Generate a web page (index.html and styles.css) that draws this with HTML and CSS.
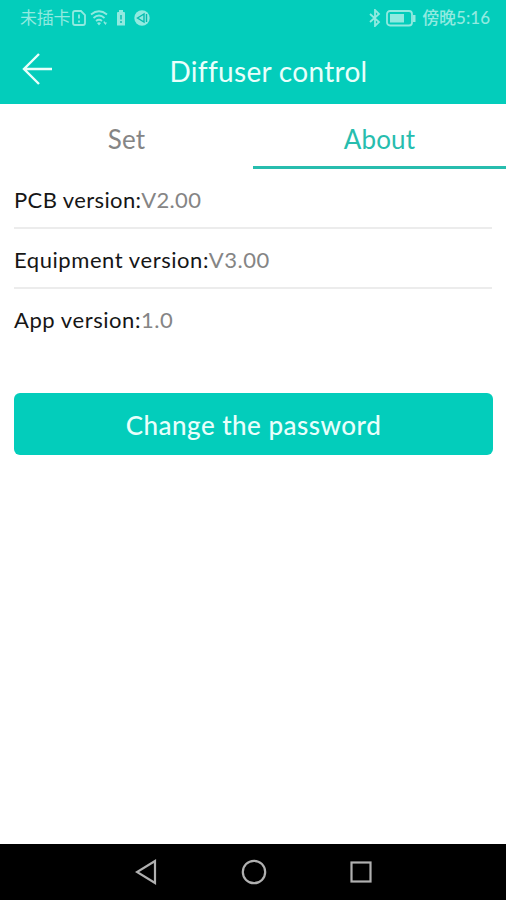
FILE: index.html
```html
<!DOCTYPE html>
<html lang="en">
<head>
<meta charset="utf-8">
<title>Diffuser control</title>
<link rel="stylesheet" href="styles.css">
</head>
<body>
<div class="screen">
  <header class="header">
    <div class="status">
      <div class="status-left">
        <span class="carrier">未插卡</span>
        <svg class="sim" width="14" height="16" viewBox="0 0 14 16"><path d="M3 1h6l4 4v8q0 2-2 2H3q-2 0-2-2V3q0-2 2-2zM7 4.500v4M7 10.500v2"/></svg>
        <svg class="wifi" width="19" height="16" viewBox="0 0 19 16"><path d="M1 4.500q8-6.500 16 0M3.500 8q5.500-5 11 0M6 11q3-2.500 6 0"/><path class="solid" d="M7 13q2-1.500 4 0l-2 2.500zM14 11l1.500 1.500H17l-1.500 2.500-2-2.500z"/></svg>
        <svg class="cell" width="10" height="16" viewBox="0 0 10 16"><path class="solid" d="M3 0h4v2h1.500l.5 1v12.500H1V3l.5-1H3z"/><path class="cut" d="M5 5v4.500M5 11v2"/></svg>
        <svg class="globe" width="16" height="16" viewBox="0 0 16 16"><circle class="solid" cx="8" cy="8" r="7.700"/><path class="cut" d="M3.500 8L10 4v8zM12.500 4v8"/></svg>
      </div>
      <div class="status-right">
        <svg class="bt" width="12" height="18" viewBox="0 0 12 18"><path d="M1 5l9 8-4 4V1l4 4-9 8"/></svg>
        <svg class="battery" width="30" height="17" viewBox="0 0 30 17"><rect x="1" y="1" width="25" height="14.500" rx="3"/><path class="solid" d="M4 4h14v8.500H4zM27 5h2.500v7H27z"/></svg>
        <span class="clock">傍晚5:16</span>
      </div>
    </div>
    <div class="titlebar">
      <svg class="back" width="32" height="34" viewBox="0 0 32 34"><path d="M17 2L2 17l15 15M2 17h28"/></svg>
      <h1 class="title">Diffuser control</h1>
    </div>
  </header>
  <nav class="tabs">
    <div class="tab">Set</div>
    <div class="tab active">About</div>
  </nav>
  <main class="content">
    <div class="row pcb">PCB version:<span class="value">V2.00</span></div>
    <div class="row">Equipment version:<span class="value">V3.00</span></div>
    <div class="row last">App version:<span class="value">1.0</span></div>
    <button class="password">Change the password</button>
  </main>
  <footer class="navbar">
    <svg width="24" height="26" viewBox="0 0 24 26"><path d="M20 2v22L2 13z"/></svg>
    <svg width="26" height="26" viewBox="0 0 26 26"><circle cx="13" cy="13" r="11.200"/></svg>
    <svg width="24" height="24" viewBox="0 0 24 24"><rect x="2.500" y="2.500" width="19" height="19"/></svg>
  </footer>
</div>
</body>
</html>
```

FILE: styles.css
```css
* { box-sizing: border-box; }
body { margin: 0; background: #fff; font-family: Lato, "Noto Sans CJK SC", sans-serif; }
svg { display: block; flex: none; fill: none; }
.screen { width: 506px; height: 900px; display: flex; flex-direction: column; }
.header { height: 104px; background: #03cdbb; color: #e9fffb; }
.status { height: 36px; padding: 0 16px 0 20px; display: flex; justify-content: space-between; align-items: center; color: #91eae0; font-size: 17px; white-space: nowrap; }
.status svg { stroke: #91eae0; stroke-width: 1.8; }
.status .solid { fill: #91eae0; stroke: none; }
.status .cut { stroke: #03bcae; stroke-width: 1.4; }
.status-left, .status-right { display: flex; align-items: center; }
.carrier { letter-spacing: -0.3px; line-height: 36px; }
.sim { margin-left: 2px; }
.wifi { margin-left: 4px; }
.cell { margin-left: 7px; }
.globe { margin-left: 8px; }
.battery { margin-left: 5px; }
.clock { margin-left: 6px; line-height: 38px; font-weight: 500; }
.titlebar { height: 68px; display: grid; grid-template-columns: 72px 1fr 41px; align-items: start; }
.back { margin: 16px 0 0 22px; stroke: #e9fffb; stroke-width: 2.4; }
.title { margin: 0; height: 68px; line-height: 70px; font-size: 28px; font-weight: 400; text-align: center; letter-spacing: 0.3px; }
.tabs { height: 65px; display: flex; color: #858585; font-size: 26px; letter-spacing: 0.2px; }
.tab { flex: 1; text-align: center; line-height: 70px; }
.active { color: #27bdae; border-bottom: 3px solid #27bdae; }
.content { flex: 1; padding: 0 14px; }
.row { height: 60px; border-bottom: 2px solid #ececec; font-size: 22px; line-height: 62px; color: #161616; white-space: nowrap; letter-spacing: 0.56px; }
.pcb { letter-spacing: 0.38px; }
.last { height: 104px; border: 0; }
.value { color: #858585; }
.password { display: block; width: 479px; height: 62px; padding: 0; border: 0; border-radius: 6px; background: #03cdbb; color: #e9fffb; font-family: inherit; font-size: 26px; font-weight: 500; line-height: 64px; letter-spacing: 0.48px; }
.navbar { height: 56px; padding-left: 2px; background: #000; display: flex; justify-content: center; align-items: center; gap: 82px; }
.navbar svg { stroke: #b0b0b0; stroke-width: 2.200; }
```
